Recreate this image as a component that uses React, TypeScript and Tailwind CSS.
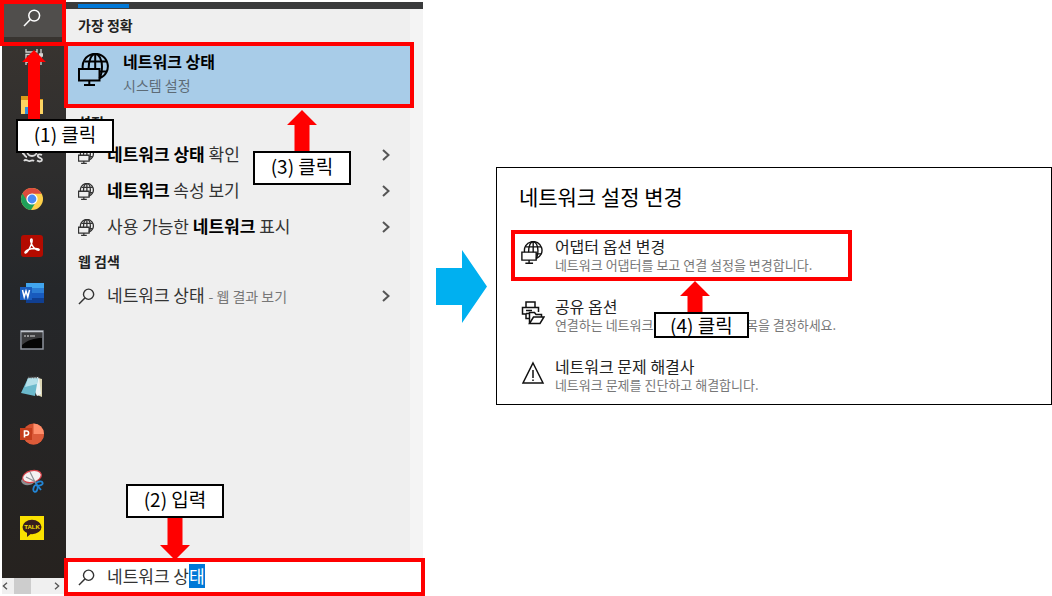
import { useEffect, useRef } from 'react';
import type { ReactNode } from 'react';
import { clsx } from 'clsx';

interface IconProps {
  className?: string;
}

const SearchIcon = ({ className }: IconProps) => (
  <svg viewBox="0 0 18 18" className={className} fill="none" stroke="currentColor" strokeWidth="1.500">
    <circle cx="11.2" cy="6.6" r="5.4" />
    <path d="M7.3 10.5 1 17" />
  </svg>
);

const NetworkIcon = ({ className }: IconProps) => (
  <svg viewBox="0 0 31 33" className={className} fill="none" stroke="currentColor">
    <path d="M4.9 16A12.6 12.6 0 1 1 21.5 25.3" />
    <path d="M10.6 16C10.6 7 13.4 1 17.2 1S24 6.5 24 13.5c0 4.8-.9 9-2.5 11.8" />
    <path d="M17.2 1v15M6.5 8.5h22M21.5 18.500h7" />
    <path d="M1 16h20.500v11.500H1zM11.300 27.500v4M6 32h11" />
  </svg>
);

const SharingIcon = ({ className }: IconProps) => (
  <svg viewBox="0 0 24 24" className={className} fill="none" stroke="currentColor" strokeWidth="1.5">
    <path d="M5 6.500V1h9v5.500M5 13H1.500V6.500h16V11M5 9.500h6M5 12.500v5h3" />
    <path d="M8.500 22.500V11.500h5l1.500 2h5.500V16" />
    <path d="M5 12.500h3.500M8.500 22.500l4-6.500h10.500l-4 6.500z" />
  </svg>
);

const WarningIcon = ({ className }: IconProps) => (
  <svg viewBox="0 0 24 24" className={className} fill="none" stroke="currentColor" strokeWidth="1.500">
    <path d="M12 2 22 22H2zM12 9v8M12 18.500V20" />
  </svg>
);

const ChevronIcon = ({ className }: IconProps) => (
  <svg viewBox="0 0 8 12" className={className} fill="none" stroke="currentColor" strokeWidth="2">
    <path d="m1 1 5.500 5L1 11" />
  </svg>
);

const TaskViewIcon = () => (
  <svg viewBox="0 0 18 16" className="w-[18px] h-4" fill="none" stroke="#d6d4d2" strokeWidth="1.300">
    <path d="M1 0v3h11V0M1 16v-3h11v3M1 5.500h11v5H1zM16 0v16" />
    <path d="M14.500 5h3v2h-3z" fill="#d6d4d2" />
  </svg>
);

const ExplorerIcon = () => (
  <svg viewBox="0 0 24 20" className="w-6 h-5">
    <path d="M1 1h8l2 3h12v14H1z" fill="#d99a1c" />
    <path d="M1 5h22v14H1z" fill="#fcd462" />
    <path d="M5 12h14v7h-4v-3H9v3H5z" fill="#2f8fdd" />
  </svg>
);

const TerminalToolIcon = () => (
  <svg viewBox="0 0 24 24" className="w-6 h-6" fill="none" stroke="#dedede" strokeWidth="1.800">
    <circle cx="12" cy="11" r="5" />
    <path d="M2 13c3 0 2 4 5 4M4 21c2-3 4 1 6 0s3-1 4 0" />
    <path d="M22 15c-3-1.500-5 0-4 1.600s4 1.200 4 3.200-3 2.200-5 .8" />
  </svg>
);

const ChromeIcon = () => (
  <svg viewBox="0 0 24 24" className="w-6 h-6">
    <circle cx="12" cy="12" r="11" fill="#fdd04a" />
    <path d="M12 12 2.500 6.500A11 11 0 0 0 11 23l5.500-9z" fill="#1fa05a" />
    <path d="M2.500 6.500A11 11 0 0 1 21.600 6.800H12L7.500 14.500z" fill="#dd4b3e" />
    <circle cx="12" cy="12" r="5.600" fill="#fff" />
    <circle cx="12" cy="12" r="4.400" fill="#4a8af4" />
  </svg>
);

const AcrobatIcon = () => (
  <svg viewBox="0 0 24 24" className="w-6 h-6">
    <rect x="1" y="1" width="22" height="22" rx="3" fill="#b30b00" />
    <path
      d="M11.500 5c-1.700 0-.8 4.500 1.800 8 2 2.700 5.500 4 5.900 2.800.5-1.500-6.500-2-10.500-.3-3 1.200-4.400 3-3.500 3.500 1.600.8 4.600-4.500 6.200-9 .8-2.300 1.200-5 .1-5z"
      fill="none"
      stroke="#fff"
      strokeWidth="1.400"
    />
  </svg>
);

const WordIcon = () => (
  <svg viewBox="0 0 24 22" className="w-6 h-[22px]">
    <path d="M6 1h18v5H6z" fill="#41a5ee" />
    <path d="M6 6h18v5H6z" fill="#2b7cd3" />
    <path d="M6 11h18v5H6z" fill="#185abd" />
    <path d="M6 16h18v5H6z" fill="#103f91" />
    <path d="M0 5h12v13H0z" fill="#1a5dbe" />
    <path d="m2.500 8 1.700 7L6 9l1.800 6 1.700-7" fill="none" stroke="#fff" strokeWidth="1.500" />
  </svg>
);

const CommandPromptIcon = () => (
  <svg viewBox="0 0 24 20" className="w-6 h-5">
    <path d="M1 1h22v18H1z" fill="#050505" stroke="#8d939c" strokeWidth="1.500" />
    <path d="M2 2h20v6C14 8 8 10 2 15z" fill="#3c3c3e" />
    <path d="M1 1.500h22" stroke="#c2c6cd" strokeWidth="1.500" />
    <path d="M4 6h2M8 5v2M10 6h5" stroke="#dcdcdc" strokeWidth="1.200" />
  </svg>
);

const NotepadIcon = () => (
  <svg viewBox="0 0 24 24" className="w-6 h-6">
    <path d="m18 3 4 1v18l-5-2z" fill="#dcd6b4" />
    <path d="m8 3 11-1 2 17-4 2z" fill="#eaf3f5" />
    <path d="M8 3h10l-3 18-14-3z" fill="#6bb9cc" />
    <path d="M8 3h10l-1 6-12 3z" fill="#b5e0ea" />
    <path d="M8 2.500h11" stroke="#5c6062" strokeWidth="1.500" strokeDasharray="1.500 1" />
  </svg>
);

const PowerPointIcon = () => (
  <svg viewBox="0 0 24 22" className="w-6 h-[22px]">
    <circle cx="13.500" cy="11" r="10.500" fill="#d35230" />
    <path d="M13.500.5A10.500 10.500 0 0 1 24 11H13.500z" fill="#ff8f6b" />
    <path d="M3 11h21a10.500 10.500 0 0 1-21 0z" fill="#dc5b39" />
    <path d="M0 5h12v12H0z" fill="#c43e1c" />
    <path d="M4.500 14.500V8h2a2 2 0 0 1 0 4.200h-2" fill="none" stroke="#fff" strokeWidth="1.600" />
  </svg>
);

const SnippingToolIcon = () => (
  <svg viewBox="0 0 24 24" className="w-6 h-6">
    <path d="M1 12c1-3 4-5 8-5l6 6c-4 4-12 5-14-1z" fill="#8b8d90" />
    <ellipse cx="12" cy="7.500" rx="9.500" ry="5.800" transform="rotate(-14 12 7.500)" fill="#f4f1f1" stroke="#d8424a" strokeWidth="1.200" />
    <path d="m10 3 6 12M6 8l10 5" stroke="#8d9196" strokeWidth="1.200" />
    <g fill="none" stroke="#2386d6" strokeWidth="1.800">
      <ellipse cx="19.500" cy="14.500" rx="3.200" ry="2" transform="rotate(-15 19.500 14.500)" />
      <ellipse cx="15.500" cy="19.500" rx="2" ry="3.400" transform="rotate(15 15.500 19.500)" />
      <path d="m17 16 4 5" />
    </g>
  </svg>
);

const TalkIcon = () => (
  <svg viewBox="0 0 24 24" className="w-6 h-6">
    <path d="M0 0h24v24H0z" fill="#fae100" />
    <ellipse cx="12" cy="11" rx="9.500" ry="7.200" fill="#371d1e" />
    <path d="m7 15 0 6 5-4z" fill="#371d1e" />
    <text x="12" y="13" textAnchor="middle" fontSize="6" fontWeight="700" fontFamily="Liberation Sans, sans-serif" fill="#fae100">
      TALK
    </text>
  </svg>
);

const taskbarApps = [
  { name: '파일 탐색기', icon: <ExplorerIcon /> },
  { name: '터미널', icon: <TerminalToolIcon /> },
  { name: 'Chrome', icon: <ChromeIcon /> },
  { name: 'Acrobat', icon: <AcrobatIcon /> },
  { name: 'Word', icon: <WordIcon /> },
  { name: '명령 프롬프트', icon: <CommandPromptIcon /> },
  { name: '메모장', icon: <NotepadIcon /> },
  { name: 'PowerPoint', icon: <PowerPointIcon /> },
  { name: '캡처 도구', icon: <SnippingToolIcon /> },
  { name: '카카오톡', icon: <TalkIcon /> },
];

interface StepArrowProps {
  width: number;
  height: number;
  className?: string;
}

// The head is always half as tall as it is wide, only the shaft grows
const StepArrow = ({ width, height, className }: StepArrowProps) => {
  const mid = width / 2;
  const shaft = width / 4;
  return (
    <svg width={width} height={height} className={clsx('shrink-0', className)} fill="#ff0000">
      <path d={`M${mid} 0L${width} ${mid}H${mid + shaft}V${height}H${mid - shaft}V${mid}H0z`} />
    </svg>
  );
};

interface CalloutProps {
  className: string;
  boxClassName?: string;
  arrow: ReactNode;
  arrowBelow?: boolean;
  children: ReactNode;
}

// Numbered step label with a red arrow above or below it
const Callout = ({ className, boxClassName = 'w-[98px] h-[34px] pb-1', arrow, arrowBelow = false, children }: CalloutProps) => (
  <div className={clsx('absolute z-20 flex flex-col pointer-events-none', className)}>
    {!arrowBelow && arrow}
    <div
      className={clsx(
        'flex items-center justify-center border-2 border-black bg-white text-[19px] leading-6 text-black overflow-hidden',
        boxClassName
      )}
    >
      {children}
    </div>
    {arrowBelow && arrow}
  </div>
);

const Taskbar = () => (
  <div className="flex flex-col w-16 shrink-0 pb-0.5">
    <nav className="relative flex-1 flex flex-col bg-gradient-to-b from-[#3b3631] via-[#25272a] to-[#26221f]">
      <button aria-label="검색" className="h-[35px] flex items-center justify-center pb-1 pr-1 bg-[#504e4c] text-white">
        <SearchIcon className="w-[18px] h-[18px]" />
      </button>
      <button aria-label="작업 보기" className="h-11 flex items-center justify-center pb-1">
        <TaskViewIcon />
      </button>
      {taskbarApps.map((app) => (
        <button key={app.name} aria-label={app.name} className="h-[47px] flex items-center justify-center pr-1">
          {app.icon}
        </button>
      ))}
      <div className="absolute -top-0.5 -left-0.5 right-0 h-[46px] border-4 border-[#ff0000] pointer-events-none" />
    </nav>
    <div className="h-4 flex items-center justify-between bg-[#f0f0f0] text-[#555]">
      <button aria-label="왼쪽으로 스크롤" className="w-3 flex">
        <ChevronIcon className="w-1.5 h-2 rotate-180" />
      </button>
      <div className="w-[17px] h-4 bg-[#cdcdcd]" />
      <div className="flex-1" />
      <button aria-label="오른쪽으로 스크롤" className="w-3 flex">
        <ChevronIcon className="w-1.5 h-2" />
      </button>
    </div>
  </div>
);

interface ResultRowProps {
  icon: ReactNode;
  children: ReactNode;
}

const ResultRow = ({ icon, children }: ResultRowProps) => (
  <button className="h-9 flex items-center pl-3 pr-5 text-left text-[17px] leading-6 text-[#333]">
    <span className="w-[29px] shrink-0">{icon}</span>
    <span className="flex-1 whitespace-nowrap pb-0.5">{children}</span>
    <ChevronIcon className="w-2 h-3 text-[#555]" />
  </button>
);

const SearchPanel = () => {
  const inputRef = useRef<HTMLInputElement>(null);

  // The last syllable stays selected while it is being composed
  useEffect(() => {
    inputRef.current?.focus();
    inputRef.current?.setSelectionRange(6, 7);
  }, []);

  return (
    <div className="flex-1 min-w-0 flex flex-col">
      <div className="h-[7px] bg-[#3a3b3c] pl-3 pt-0.5">
        <div className="w-[51px] h-1 bg-[#0078d7]" />
      </div>
      <div className="flex-1 flex bg-[#efefef]">
        <div className="flex-1 min-w-0 flex flex-col">
          <h2 className="h-[33px] flex items-center pl-3 pb-0.5 text-sm font-bold text-[#222]">가장 정확</h2>
          <button className="relative z-10 -ml-0.5 -mr-1 h-[66px] flex items-center pl-2.5 text-left bg-[#a8cce8] border-4 border-[#ff0000]">
            <NetworkIcon className="w-[31px] h-[33px] mb-3 stroke-2 text-black" />
            <span className="flex flex-col pl-3.5 pb-1">
              <span className="text-base leading-6 font-bold text-black">네트워크 상태</span>
              <span className="text-sm leading-6 text-[#5d6b76]">시스템 설정</span>
            </span>
          </button>
          <h2 className="h-[29px] flex items-center pl-3 pb-0.5 text-sm font-bold text-[#222]">설정</h2>
          <ResultRow icon={<NetworkIcon className="w-4 h-[17px] stroke-[2.5]" />}>
            <b className="text-black">네트워크 상태</b> 확인
          </ResultRow>
          <ResultRow icon={<NetworkIcon className="w-4 h-[17px] stroke-[2.5]" />}>
            <b className="text-black">네트워크</b> 속성 보기
          </ResultRow>
          <ResultRow icon={<NetworkIcon className="w-4 h-[17px] stroke-[2.5]" />}>
            사용 가능한 <b className="text-black">네트워크</b> 표시
          </ResultRow>
          <h2 className="h-[33px] flex items-center pl-3 pb-0.5 text-sm font-bold text-[#222]">웹 검색</h2>
          <ResultRow icon={<SearchIcon className="w-[17px] h-[17px]" />}>
            네트워크 상태 <span className="text-sm text-[#777]">- 웹 결과 보기</span>
          </ResultRow>
        </div>
        <div className="w-[13px] bg-[#f4f4f4]" />
      </div>
      <label className="relative z-10 -mx-0.5 h-[38px] flex items-center pl-2.5 gap-3 bg-white border-4 border-[#ff0000] text-[#333]">
        <SearchIcon className="w-[17px] h-[17px] shrink-0" />
        <input
          ref={inputRef}
          type="text"
          aria-label="검색어"
          defaultValue="네트워크 상태"
          className="flex-1 min-w-0 pb-0.5 text-[17px] leading-6 text-[#333] outline-none selection:bg-[#0078d7] selection:text-white"
        />
      </label>
    </div>
  );
};

interface SettingRowProps {
  icon: ReactNode;
  title: string;
  description: string;
  highlighted?: boolean;
}

const SettingRow = ({ icon, title, description, highlighted = false }: SettingRowProps) => (
  <button
    className={clsx(
      'w-[341px] h-[51px] flex items-center pl-1.5 pb-0.5 text-left whitespace-nowrap border-4',
      highlighted ? 'border-[#ff0000]' : 'border-transparent'
    )}
  >
    <span className="w-[34px] pb-1 shrink-0 text-[#111]">{icon}</span>
    <span className="flex flex-col">
      <span className="text-base leading-5 text-[#222]">{title}</span>
      <span className="text-[13px] leading-[18px] text-[#777]">{description}</span>
    </span>
  </button>
);

const NetworkSettings = () => (
  <section className="relative flex-1 min-w-0 h-[238px] border border-black bg-white pl-3.5">
    <h1 className="pt-3.5 pl-2 h-[62px] text-[21px] leading-7 text-black">네트워크 설정 변경</h1>
    <div className="flex flex-col gap-[9px]">
      <SettingRow
        highlighted
        icon={<NetworkIcon className="w-[22px] h-[23px] stroke-2" />}
        title="어댑터 옵션 변경"
        description="네트워크 어댑터를 보고 연결 설정을 변경합니다."
      />
      <SettingRow
        icon={<SharingIcon className="w-6 h-6" />}
        title="공유 옵션"
        description="연결하는 네트워크에 대해 공유할 항목을 결정하세요."
      />
      <SettingRow
        icon={<WarningIcon className="w-6 h-6" />}
        title="네트워크 문제 해결사"
        description="네트워크 문제를 진단하고 해결합니다."
      />
    </div>
    <Callout
      className="left-[157px] top-[113px]"
      boxClassName="w-[95px] h-[26px]"
      arrow={<StepArrow width={30} height={31} className="ml-[26px]" />}
    >
      (4) 클릭
    </Callout>
  </section>
);

const App = () => (
  <main className="flex min-h-screen bg-white font-['Noto_Sans_CJK_KR',sans-serif]">
    <section className="relative flex w-[40.2%] min-w-[400px] pl-0.5 pt-0.5">
      <Taskbar />
      <SearchPanel />
      <Callout className="left-4 top-[50px]" arrow={<StepArrow width={24} height={69} className="ml-1.5" />}>
        (1) 클릭
      </Callout>
      <Callout className="left-[253px] top-[110px] items-center" arrow={<StepArrow width={30} height={41} />}>
        (3) 클릭
      </Callout>
      <Callout
        arrowBelow
        className="left-[126px] bottom-9 items-center"
        arrow={<StepArrow width={30} height={42} className="rotate-180" />}
      >
        (2) 입력
      </Callout>
    </section>
    <div className="flex-1 min-w-0 flex items-center pb-6">
      <svg viewBox="0 0 51 73" className="w-[51px] h-[73px] shrink-0 ml-[13px] mr-[9px]" fill="#00b0f0">
        <path d="M0 18h26V0l25 36.500L26 73V55H0z" />
      </svg>
      <NetworkSettings />
    </div>
  </main>
);

export default App;
